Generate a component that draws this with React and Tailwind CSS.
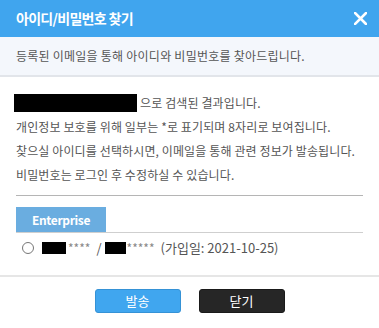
import React from 'react';

const Radio = () => (
  <span className="inline-block w-[12px] h-[12px] rounded-full border border-[#767676] bg-white shrink-0" />
);

const Mask = ({ w, h }) => <span className={`inline-block bg-black ${w} ${h}`} />;

export default function App() {
  return (
    <div
      className="w-[379px] h-[328px] bg-white overflow-hidden text-[#555]"
      style={{ fontFamily: '"Noto Sans CJK KR", "Noto Sans", sans-serif' }}
    >
      {/* Header */}
      <div className="h-[37px] bg-[#40a5ee] flex items-center justify-between pl-4 pr-[11px]">
        <h2 className="text-[14px] font-bold text-white tracking-[-0.05em]">아이디/비밀번호 찾기</h2>
        <svg width="13" height="13" viewBox="0 0 13 13" className="mr-[1px]">
          <path d="M1 1L12 12M12 1L1 12" stroke="#fff" strokeWidth="2.6" strokeLinecap="square" />
        </svg>
      </div>

      {/* Sub header */}
      <div className="h-[40px] bg-[#f4f7fc] border-b-2 border-[#e2e5ea] flex items-center pl-4">
        <p className="text-[12px] tracking-[0.02em] text-[#555]">등록된 이메일을 통해 아이디와 비밀번호를 찾아드립니다.</p>
      </div>

      {/* Body */}
      <div className="px-4 pt-[14px]">
        <div className="text-[12px] leading-[24px] tracking-[0.01em]">
          <p className="flex items-center">
            <span className="inline-block w-[123px] h-[18px] bg-black -ml-[2px] mr-[3px]" />
            으로 검색된 결과입니다.
          </p>
          <p>개인정보 보호를 위해 일부는 *로 표기되며 8자리로 보여집니다.</p>
          <p>찾으실 아이디를 선택하시면, 이메일을 통해 관련 정보가 발송됩니다.</p>
          <p>비밀번호는 로그인 후 수정하실 수 있습니다.</p>
        </div>

        <div className="mt-[8px] border-t border-[#b5b5b5]" />

        <div className="mt-[11px] border-b border-[#cfcfcf]">
          <div className="w-[90px] h-[25px] bg-[#6aade0] flex items-center justify-center text-white text-[12px] font-bold tracking-[-0.03em]">
            Enterprise
          </div>
        </div>

        <div className="h-[29px] flex items-center pl-[6px] text-[13px] text-[#555]">
          <Radio />
          <span className="ml-[8px] flex items-center">
            <Mask w="w-[24px]" h="h-[12px]" />
            <span className="ml-[2px] text-[#888] text-[12px]">****</span>
            <span className="ml-[6px] mr-[3px]">/</span>
            <Mask w="w-[21px]" h="h-[12px]" />
            <span className="ml-[1px] text-[#888] text-[12px]">*****</span>
            <span className="ml-[6px]">(가입일: 2021-10-25)</span>
          </span>
        </div>
      </div>

      {/* Footer */}
      <div className="mt-[13px] border-t-2 border-[#e6e6e6] flex justify-center gap-[18px] pt-[12px]">
        <button className="w-[86px] h-[24px] rounded-[3px] bg-[#40a6ef] border border-[#3592d6] text-white text-[13px]">
          발송
        </button>
        <button className="w-[86px] h-[24px] rounded-[3px] bg-[#262626] border border-[#1a1a1a] text-white text-[13px]">
          닫기
        </button>
      </div>
    </div>
  );
}
